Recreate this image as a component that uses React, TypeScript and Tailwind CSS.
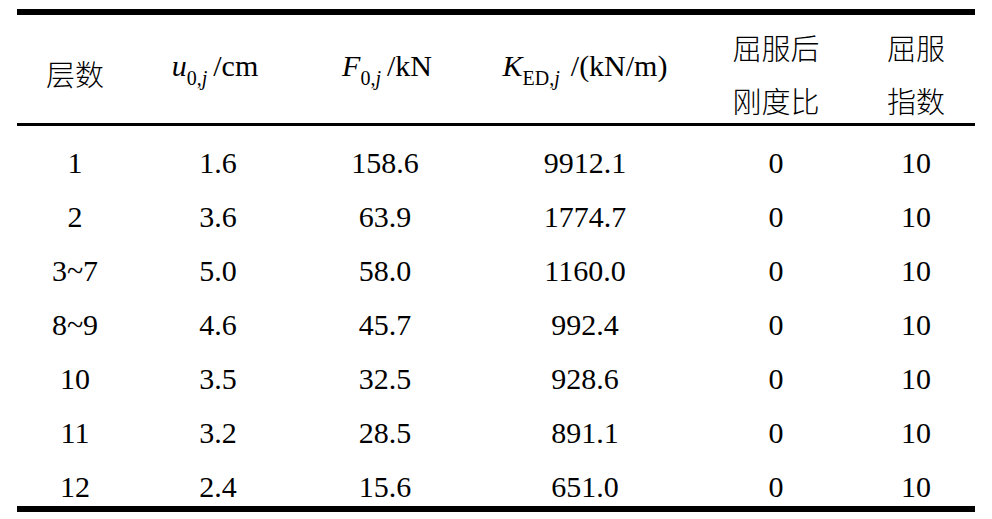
const rows = [
  ["1", "1.6", "158.6", "9912.1", "0", "10"],
  ["2", "3.6", "63.9", "1774.7", "0", "10"],
  ["3~7", "5.0", "58.0", "1160.0", "0", "10"],
  ["8~9", "4.6", "45.7", "992.4", "0", "10"],
  ["10", "3.5", "32.5", "928.6", "0", "10"],
  ["11", "3.2", "28.5", "891.1", "0", "10"],
  ["12", "2.4", "15.6", "651.0", "0", "10"],
]

const cols = "grid grid-cols-[116px_170px_164px_236px_146px_126px]"
const serif = "font-['Liberation_Serif',serif]"
const cjk = "font-['Noto_Sans_CJK_SC',sans-serif] font-light text-[29px]"

function Sub({ children }: { children: React.ReactNode }) {
  return <span className="relative top-[9px] text-[20px]">{children}</span>
}

export default function App() {
  return (
    <div className="min-h-screen bg-white pt-[9px] text-black text-[30px]">
      <div className="ml-[17px] w-[958px] border-t-[6px] border-b-[6px] border-black">
        {/* header */}
        <div className={`${cols} h-[111px] border-b-[3px] border-black text-center`}>
          <div className={`${cjk} flex items-center justify-center pt-[6px]`}>层数</div>
          <div className={`${serif} flex items-center justify-center pb-[8px] pr-[6px] leading-[40px]`}>
            <span>
              <i>u</i>
              <Sub>
                0,<i>j</i>
              </Sub>
              <span className="ml-[6px]">/cm</span>
            </span>
          </div>
          <div className={`${serif} flex items-center justify-center pb-[8px] pl-[4px] leading-[40px]`}>
            <span>
              <i>F</i>
              <Sub>
                0,<i>j</i>
              </Sub>
              <span className="ml-[6px]">/kN</span>
            </span>
          </div>
          <div className={`${serif} flex items-center justify-center pb-[8px] leading-[40px]`}>
            <span>
              <i>K</i>
              <Sub>
                ED,<i>j</i>
              </Sub>
              <span className="ml-[11px]">/(kN/m)</span>
            </span>
          </div>
          <div className={`${cjk} pt-[6px] leading-[53px]`}>
            屈服后
            <br />
            刚度比
          </div>
          <div className={`${cjk} pt-[6px] pl-[8px] leading-[53px]`}>
            屈服
            <br />
            指数
          </div>
        </div>

        {/* body */}
        <div className={`${serif} h-[380px] pt-[10px]`}>
          {rows.map((r, i) => (
            <div key={i} className={`${cols} text-center leading-[54px]`}>
              {r.map((v, j) => (
                <div key={j} className={j === 5 ? "pl-[8px]" : ""}>
                  {v}
                </div>
              ))}
            </div>
          ))}
        </div>
      </div>
    </div>
  )
}
